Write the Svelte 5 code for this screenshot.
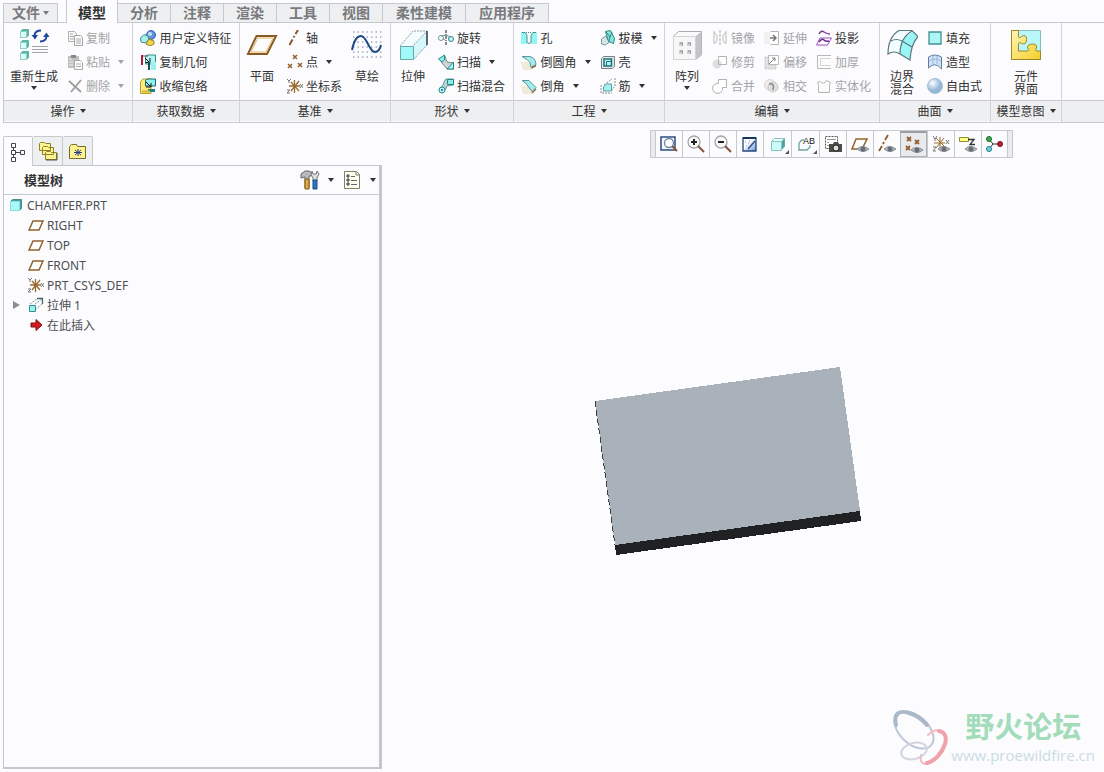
<script lang="ts">
	type Item = { icon: string; label: string; menu?: boolean; disabled?: boolean };
	type Big = { icon: string; lines: string[]; menu?: boolean };
	type Group = { name: string; kind: string; big?: Big; columns: Item[][]; after?: Big };

	const tabs = ['分析', '注释', '渲染', '工具', '视图', '柔性建模', '应用程序'];

	const groups: Group[] = [
		{
			name: '操作',
			kind: 'wide',
			big: { icon: 'regen', lines: ['重新生成'], menu: true },
			columns: [[
				{ icon: 'copy', label: '复制', disabled: true },
				{ icon: 'paste', label: '粘贴', menu: true, disabled: true },
				{ icon: 'remove', label: '删除', menu: true, disabled: true }
			]]
		},
		{
			name: '获取数据',
			kind: 'center',
			columns: [[
				{ icon: 'udf', label: '用户定义特征' },
				{ icon: 'copygeom', label: '复制几何' },
				{ icon: 'shrink', label: '收缩包络' }
			]]
		},
		{
			name: '基准',
			kind: 'start',
			big: { icon: 'plane', lines: ['平面'] },
			columns: [[
				{ icon: 'axis', label: '轴' },
				{ icon: 'point', label: '点', menu: true },
				{ icon: 'csys', label: '坐标系' }
			]],
			after: { icon: 'sketch', lines: ['草绘'] }
		},
		{
			name: '形状',
			kind: 'start',
			big: { icon: 'extrude', lines: ['拉伸'] },
			columns: [[
				{ icon: 'revolve', label: '旋转' },
				{ icon: 'sweep', label: '扫描', menu: true },
				{ icon: 'blend', label: '扫描混合' }
			]]
		},
		{
			name: '工程',
			kind: 'center',
			columns: [
				[
					{ icon: 'hole', label: '孔' },
					{ icon: 'round', label: '倒圆角', menu: true },
					{ icon: 'chamfer', label: '倒角', menu: true }
				],
				[
					{ icon: 'draft', label: '拔模', menu: true },
					{ icon: 'shell', label: '壳' },
					{ icon: 'rib', label: '筋', menu: true }
				]
			]
		},
		{
			name: '编辑',
			kind: 'start',
			big: { icon: 'pattern', lines: ['阵列'], menu: true },
			columns: [
				[
					{ icon: 'mirror', label: '镜像', disabled: true },
					{ icon: 'trim', label: '修剪', disabled: true },
					{ icon: 'merge', label: '合并', disabled: true }
				],
				[
					{ icon: 'extend', label: '延伸', disabled: true },
					{ icon: 'offset', label: '偏移', disabled: true },
					{ icon: 'intersect', label: '相交', disabled: true }
				],
				[
					{ icon: 'project', label: '投影' },
					{ icon: 'thicken', label: '加厚', disabled: true },
					{ icon: 'solidify', label: '实体化', disabled: true }
				]
			]
		},
		{
			name: '曲面',
			kind: 'start',
			big: { icon: 'boundary', lines: ['边界', '混合'] },
			columns: [[
				{ icon: 'fill', label: '填充' },
				{ icon: 'style', label: '造型' },
				{ icon: 'freestyle', label: '自由式' }
			]]
		},
		{
			name: '模型意图',
			kind: 'center',
			big: { icon: 'component', lines: ['元件', '界面'] },
			columns: []
		}
	];

	const viewTools = [
		{ icon: 'refit', label: '重新调整' },
		{ icon: 'zoomin', label: '放大' },
		{ icon: 'zoomout', label: '缩小' },
		{ icon: 'repaint', label: '重画' },
		{ icon: 'shading', label: '显示样式', menu: true },
		{ icon: 'views', label: '已命名视图', menu: true },
		{ icon: 'viewmgr', label: '视图管理器' },
		{ icon: 'planeshow', label: '平面显示' },
		{ icon: 'axisshow', label: '轴显示' },
		{ icon: 'pointshow', label: '点显示', on: true },
		{ icon: 'csysshow', label: '坐标系显示' },
		{ icon: 'noteshow', label: '注释显示' },
		{ icon: 'spin', label: '旋转中心' }
	];

	const tree = [
		{ icon: 'plane16', label: 'RIGHT' },
		{ icon: 'plane16', label: 'TOP' },
		{ icon: 'plane16', label: 'FRONT' },
		{ icon: 'csys', label: 'PRT_CSYS_DEF' },
		{ icon: 'extrude16', label: '拉伸 1', expand: true },
		{ icon: 'insert', label: '在此插入' }
	];

	const eye = '<path d="M7 15q5-5 12 0q-6 5-12 0z" fill="#b4b8bc" stroke="#8b8e92"/><circle cx="13" cy="15" r="2.500" fill="#66707a"/>';
	const cube = (y: number) =>
		`<path d="M2.500 ${y + 2.5}l2-2h6v6l-2 2h-6z" fill="#4fb8a8" stroke="#62b3a6"/><path d="M2.500 ${y + 2.5}h6v6h-6z" fill="#dffcf8" stroke="#8ed0c6"/>`;

	const icons: Record<string, string> = {
		// 32px
		regen: cube(0) + cube(11) + cube(22) +
			'<path d="M14 17.500h16M14 20.500h16M14 23.500h16" stroke="#a2a4a8"/><path d="M23 1.500q-6 0-6.500 5M22 12.500q6 0 6.500-5" fill="none" stroke="#1f459c" stroke-width="2"/><path d="M13.500 6h6.500l-3 4.500zM25 8h6.500l-3-4.500z" fill="#1f459c"/>',
		plane: '<path d="M10.500 7h19.500l-9 18H2z" fill="#fdfdfd" stroke="#8a5a22" stroke-width="2"/><path d="M12 9h15l-7 14H5z" fill="none" stroke="#ddb86a"/>',
		sketch: '<path d="M2 3h29M2 8h29M2 13h29M2 18h29M2 23h29M2 28h29" stroke="#9fabc2" stroke-width="1.500" stroke-dasharray="1.500 3"/><path d="M1 21C3 11 6 7 10 7c6 0 8 16 14 16 3 0 5-3 6-7" fill="none" stroke="#204a86" stroke-width="2"/>',
		extrude: '<path d="M16 2h14v14L17 30V17H3z" fill="#f4fcff"/><path d="M30 2v14L17 30V17z" fill="#d5f7fb"/><path d="M3 17L16 2h14L16 17M30 16L17 30" fill="none" stroke="#86a0a3" stroke-dasharray="2 1"/><path d="M30 2v14" stroke="#334" stroke-width="1.500"/><path d="M3.500 17.500h13v13h-13z" fill="#a2f9fa" stroke="#64a8a8"/>',
		pattern: '<path d="M2.500 7l5-4.500h23V26l-6 4.500h-22z" fill="#fafafa" stroke="#a9abae"/><path d="M25 7l5.500-4.500V26L25 30.500z" fill="#c3c5c8"/><path d="M2.500 7.500h22v23h-22z" fill="#f7f7f8" stroke="#d3d4d6"/><path d="M8 13h4v4H8zM16 13h4v4h-4zM8 21h4v4H8zM16 21h4v4h-4z" fill="#ccced1"/><path d="M9 14h2.500v2.500M17 14h2.500v2.500M9 22h2.500v2.500M17 22h2.500v2.500" fill="none" stroke="#8e9094"/>',
		boundary: '<path d="M2 25Q3 8 12 1.500h14Q16 8 15 26 9 22 2 25z" fill="#f3fcff"/><path d="M15 12L27 2l5 6q-7 7-8 23l-10-6z" fill="#9af5f6"/><path d="M2 25Q2 8 13 1.500h13l6 6Q25 15 24 31L14 25Q8 21 2 25zM5 12q5-3 11 0l10 6M14 25Q14 9 26 2" fill="none" stroke="#5d777c" stroke-width="1.200"/>',
		component: '<defs><linearGradient id="gy" x1="0" y1="0" x2="1" y2="1"><stop stop-color="#fff6b8"/><stop offset="1" stop-color="#f5cf25"/></linearGradient></defs><path d="M1.500 1.500h29v29h-29z" fill="#b9f7fa" stroke="#87bfc0"/><path d="M1.500 1.500h7v6q1 3 3 0 5-3 5 3t-5 4q-2-2-3 0v7.500h9q3-1 0-3 0-4 5-4t4 4q-2 2 0 3h4v8.500h-29z" fill="url(#gy)" stroke="#9a8726"/>',
		// 16px
		copy: '<path d="M1.500 1.500h6l2 2v8h-8z" fill="#f8f8f8" stroke="#b2b2b2"/><path d="M7.500 5.500h6l2 2v8h-8z" fill="#fcfcfc" stroke="#a5a5a5"/><path d="M3 4h3M3 6.500h4M3 9h4M9 9h5M9 11h5M9 13h5" stroke="#aaa"/>',
		paste: '<path d="M1 2h11v12H1z" fill="#bfc0c1"/><path d="M4 1h5v3H4z" fill="#888"/><path d="M2 5h3M2 8h4M2 11h4" stroke="#eee"/><path d="M7.500 6.500h6l2 2v7h-8z" fill="#fcfcfc" stroke="#aaa"/><path d="M9 10h5M9 12.500h5" stroke="#aaa"/>',
		remove: '<path d="M2 3l12 11M14 2L4 14" stroke="#9c9c9c" stroke-width="1.800"/>',
		udf: '<circle cx="11" cy="5" r="4.500" fill="#5f92da" stroke="#3a62a4"/><circle cx="10" cy="4" r="2" fill="#c9e0fa"/><path d="M.500 8L4 4.500 8 6l1 4-4 3-4-1z" fill="#a5efe8" stroke="#3c8d8d"/><path d="M6 14l3-5 5 2v3l-4 2z" fill="#efd64c" stroke="#98802a"/>',
		copygeom: '<path d="M5.500 2.500L7 1h8.500v9H5.500z" fill="#b4f5f3" stroke="#3a8a86"/><path d="M1 1h2v10H1z" fill="#b51b36"/><path d="M3 2h5" stroke="#555"/><path d="M5 4l4 4M5.500 8.500H10V4" fill="none" stroke="#111"/><path d="M11 8h5v8h-5z" fill="#9bf1f2"/><path d="M8 8h2v8H8z" fill="#1b4f54"/>',
		shrink: '<path d="M.500 3.500L3 1h8v14.500H.500z" fill="#ffeb7a" stroke="#b59c32"/><path d="M5.500 2.500L7 1h8.500v7H5.500z" fill="#8ff0ef" stroke="#1d6664"/><path d="M6 4l4 4M6 9h5V5" fill="none" stroke="#111"/><path d="M8 11h7v3H8z" fill="#238186"/><path d="M2 13.500h8" stroke="#cdb53c" stroke-width="2"/>',
		axis: '<path d="M11 0L8.500 4M7.500 6l-1 1.500M5.500 9.500L2.500 15" stroke="#8d5826" stroke-width="2"/>',
		point: '<path d="M6 1l4 4m0-4L6 5M1 10l4 4m0-4l-4 4M11 9l4 4m0-4l-4 4" stroke="#95602f" stroke-width="1.500"/>',
		csys: '<path d="M2 8h11M7.500 2v13M4 4l8 9M12 3L4 13" stroke="#9a6a2e" stroke-width="1.300"/><path d="M0 1l2 2 2-2M2 3v2M0 12h3l-3 3h3M13 6l3 4m0-4l-3 4" fill="none" stroke="#777"/>',
		revolve: '<circle cx="3" cy="8" r="2.500" fill="#fff" stroke="#6a979b"/><circle cx="13" cy="9" r="2.500" fill="#b5fafa" stroke="#447e83"/><path d="M8 0v16" stroke="#111" stroke-dasharray="3 1 1 1"/><path d="M3 6q5-2 10 1M5 9l2 1" fill="none" stroke="#6a979b"/>',
		sweep: '<path d="M2 5l5-3 2 6 7 1v6H9L4 9z" fill="#ced5d8" stroke="#7d8b8e"/><path d="M.500 5L6.500 1v5L4 8z" fill="#86f0ea" stroke="#248985"/><path d="M9 15h6.500V8z" fill="#a9f6f2" stroke="#248985"/>',
		blend: '<path d="M8 1h7.500v6L9 8q-1 5-5 6-2-2-2-4 3-1 4-6z" fill="#bcd3d6" stroke="#6b989b"/><path d="M9.500 1.500h6v5h-6z" fill="#8aece6" stroke="#248985"/><circle cx="4" cy="12" r="3" fill="#b4f9f6" stroke="#2c8789"/><circle cx="4" cy="12" r="1" fill="#2564a0"/>',
		hole: '<path d="M0 2h4l2 4v8H0zM16 2h-4l-2 4v8h6z" fill="#93f6f4"/><path d="M1 2.500h3l2 3v7q2 2 4 0v-7l2-3h3" fill="none" stroke="#4b8f92"/><path d="M5 2.500h6" stroke="#35878a" stroke-dasharray="1 1"/>',
		round: '<path d="M0 8h8l3 3v5H2z" fill="#f0eadb"/><path d="M1 2.500h8q6 2 6 8l-5 3q0-6-4-8z" fill="#9feeeb" stroke="#5f9395"/><path d="M10.500 14l4.500-2.500" stroke="#8f7043" stroke-width="1.500"/>',
		chamfer: '<path d="M0 8h8l3 3v5H2z" fill="#f0eadb"/><path d="M1 2.500h7l7 7-4 4-6-8z" fill="#9feeeb" stroke="#5f9395"/><path d="M11 15l4-4" stroke="#8f7043" stroke-width="1.500"/>',
		draft: '<path d="M1.500 9l4-3 4 6-4 3-4-1z" fill="#d6e6e8" stroke="#7b979a"/><path d="M5.500 1.500l5-1 4 8-1 5-5-2z" fill="#86e6dd" stroke="#318584"/><path d="M6 2l4 5-1 4M10 7l2-5" fill="none" stroke="#318584"/>',
		shell: '<path d="M1.500 4.500l2-2h11v10l-2 2h-11z" fill="#e4e7e8" stroke="#71868a"/><path d="M4 5h7.500v7H4z" fill="#a9f9f7" stroke="#2a6f78" stroke-width="1.500"/><path d="M6.500 12V7.500H11" fill="none" stroke="#2a6f78"/>',
		rib: '<path d="M4 7L15 1v8l-4 4H4z" fill="#f7fbfc"/><path d="M4 7l8-6M15 0v8l-4 5M1 7v8h11" fill="none" stroke="#8b8b8b" stroke-dasharray="2 1"/><path d="M3.500 13V9l3-3h5v7z" fill="#a2f3ee" stroke="#5a9ea1"/>',
		mirror: '<path d="M2 1.500v12l3-2V6zM14 1.500v12l-3-2V6z" fill="#fafafa" stroke="#bdbdbd"/><path d="M8 0v16" stroke="#aaa" stroke-dasharray="3 1"/>',
		trim: '<path d="M6.500 2.500h8v8h-8z" fill="#fff" stroke="#b2b2b2"/><circle cx="5" cy="10" r="4.500" fill="#dedede"/><path d="M6.500 6v4.500H10" fill="none" stroke="#b2b2b2"/>',
		merge: '<path d="M6.500 1.500h8v8h-4a5 5 0 1 1-4-4z" fill="#fff" stroke="#b2b2b2"/>',
		extend: '<path d="M0 2h6v12H0z" fill="#f0f0f0"/><path d="M6.500 1.500h8v13h-8" fill="#fff" stroke="#b5b5b5"/><path d="M6 8h6M9 5l3 3-3 3" fill="none" stroke="#777" stroke-width="1.500"/>',
		offset: '<path d="M1 3v12h11v-4H5V3z" fill="#e2e2e2" stroke="#c5c5c5" stroke-dasharray="2 1"/><path d="M4.500 1.500h10v9h-10z" fill="#fff" stroke="#bbb"/><path d="M5 10l6-6M8 4h3v3" fill="none" stroke="#808080"/>',
		intersect: '<circle cx="6" cy="7" r="5.500" fill="#ececec" stroke="#d6d6d6"/><circle cx="9" cy="9" r="5" fill="#e0e0e0" stroke="#cbcbcb"/><path d="M5 6q6-1 4 6" fill="none" stroke="#8b8b8b" stroke-width="1.500"/>',
		project: '<path d="M3 4q2-4 5-2t6 2" fill="none" stroke="#78389a" stroke-width="1.500"/><path d="M4 8h11.500l-4 7H.500z" fill="#fff" stroke="#9b4fc2"/><path d="M3 12q3-4 5-2t5 1" fill="none" stroke="#74288e" stroke-width="1.500"/>',
		thicken: '<path d="M15 1.500H1.500v13H15" fill="none" stroke="#b8b8b8"/><path d="M15 4.500H4.500v7H15" fill="none" stroke="#d2d2d2"/>',
		solidify: '<path d="M1.500 4.500l3-1q3 4 6-1l4 2-1 3v7h-11v-7z" fill="#fafafa" stroke="#b5b5b5"/>',
		fill: '<path d="M2 2h12v12H2z" fill="#aef5f5" stroke="#3b9492" stroke-width="1.300"/>',
		style: '<path d="M1.500 3q6-4 13 0v12Q8 7 1.500 14z" fill="#cfe3f6" stroke="#5f7da3"/><path d="M6 2v8M10 2v8M2 7q6-4 12 0" fill="none" stroke="#9dbadb"/>',
		freestyle: '<defs><radialGradient id="ball" cx=".35" cy=".3"><stop stop-color="#fff"/><stop offset="1" stop-color="#94b8d8"/></radialGradient></defs><circle cx="8" cy="8" r="7.500" fill="url(#ball)" stroke="#a3bdd4"/>',
		plane16: '<path d="M5 4h10l-4 9H1z" fill="#fff" stroke="#90602f" stroke-width="1.500"/>',
		extrude16: '<path d="M2 7l7-5M7 7l7-5M7 13l7-6" fill="none" stroke="#578183" stroke-dasharray="1 1"/><path d="M9 1.500h5.500V7" fill="none" stroke="#3e696c" stroke-width="1.300"/><path d="M1.500 8.500h6v6h-6z" fill="#94f4f1" stroke="#3f8d8c"/>',
		insert: '<path d="M3 6h5V2.500L14 8l-6 5.500V10H3z" fill="#d71920" stroke="#7a1010"/>',
		part: '<path d="M2.500 4.500l2-2h9v9l-2 2h-9z" fill="#4ba1a0" stroke="#4a8f90"/><path d="M2.500 4.500h9v9h-9z" fill="#a7fbfa" stroke="#8fdcda"/>',
		// 20px
		treetab: '<g fill="#fff" stroke="#444"><path d="M5.500 5v12M5.500 10.500h7" /><path d="M3.500 1.500h4v4h-4zM3.500 8.500h4v4h-4zM3.500 15.500h4v4h-4zM12.500 8.500h4v4h-4z"/></g>',
		folders: '<g fill="#fff48e" stroke="#8d812b"><path d="M1.500 2.500l1-1h4l1 1h5v7h-11zM4.500 6.500l1-1h4l1 1h5v7h-11zM7.500 11.500l1-1h4l1 1h5v7h-11z"/></g><path d="M8 19h11v-7" fill="none" stroke="#555"/>',
		favorite: '<path d="M1.500 5.500l2-2h5l1 2h8v12h-16z" fill="#fff48e" stroke="#77702c"/><path d="M6 11.500h8M10 8v7M7 9l6 5M13 9l-6 5" stroke="#253e82"/>',
		settings: '<path d="M1 8V4l4-3h4l3 2-1 3H9v12H5V7z" fill="#b7bbc0" stroke="#666"/><path d="M5 9h4v10H5z" fill="#e7aa37" stroke="#74591d"/><path d="M12 1l1 3h3l1-3 2 3-2 4v3h-4V8l-2-3z" fill="#ddd" stroke="#777"/><path d="M13 10h4v9h-4z" fill="#3273c2" stroke="#184a87"/>',
		list: '<path d="M2.500 1.500h12l3 3v14h-15z" fill="#fffff4" stroke="#807f65"/><path d="M14 1v4h4" fill="none" stroke="#807f65"/><path d="M9 6.500h4M9 10.500h6M9 14.500h6" stroke="#666"/><path d="M5 5h2v2H5zM5 9h2v2H5zM5 13h2v2H5z" fill="#fff" stroke="#333"/>',
		refit: '<path d="M2 3h14v13H2z" fill="#f6fbff" stroke="#2a4b80" stroke-width="1.500"/><circle cx="10" cy="9" r="4.500" fill="#fff" stroke="#71869b" stroke-width="1.300"/><path d="M13 12l5 5" stroke="#8a5430" stroke-width="2"/>',
		zoomin: '<circle cx="8" cy="8" r="6" fill="#fafafa" stroke="#a6a6a6" stroke-width="1.300"/><path d="M5 8h6M8 5v6" stroke="#222" stroke-width="2"/><path d="M12 12l6 6" stroke="#85543a" stroke-width="2"/>',
		zoomout: '<circle cx="8" cy="8" r="6" fill="#fafafa" stroke="#a6a6a6" stroke-width="1.300"/><path d="M5 8h6" stroke="#222" stroke-width="2"/><path d="M12 12l6 6" stroke="#85543a" stroke-width="2"/>',
		repaint: '<defs><linearGradient id="gb" x1="0" y1="0" x2="1" y2="1"><stop offset=".4" stop-color="#fff"/><stop offset="1" stop-color="#5f90dc"/></linearGradient></defs><path d="M3 4h13v13H3z" fill="url(#gb)" stroke="#24457b" stroke-width="1.300"/><path d="M3 4h13" stroke="#17335f" stroke-width="2"/><path d="M8 15L15 7" stroke="#33517f" stroke-width="1.500"/><path d="M5 8h1m2 1h1m-3 3h1m2-5h1" stroke="#6f8fbd"/>',
		shading: '<path d="M3.500 7.500l3-3h10v8l-3 3h-10z" fill="#4da5a2" stroke="#6aa9a7"/><path d="M3.500 7.500h10v9h-10z" fill="#cdfbf9" stroke="#86c4c2"/><path d="M3.500 7.500l3-3h10l-3 3z" fill="#eafffd" stroke="#86c4c2"/>',
		views: '<path d="M3 9l3-3h2M3 9v7h8l3-3v-2" fill="none" stroke="#6aa3a1" stroke-width="1.300"/><text x="7" y="10" font-family="Liberation Sans" font-size="9" fill="#111">AB</text>',
		viewmgr: '<path d="M2.500 2.500h12v12h-12z" fill="#fff" stroke="#555" stroke-dasharray="2 1"/><path d="M4 5.500h9M4 8.500h2M4 11.500h2" stroke="#999"/><path d="M6 10h4l1-2h4l1 2h3v8H6z" fill="#4b4b48"/><circle cx="13" cy="14" r="3" fill="#ddd" stroke="#222"/>',
		planeshow: '<path d="M6 5h11l-5 10H2z" fill="#fff" stroke="#90602f" stroke-width="1.500"/>' + eye,
		axisshow: '<path d="M11 1L8 6M7 8l-1 2M5 12l-3 5" stroke="#8d5826" stroke-width="1.800"/>' + eye,
		pointshow: '<path d="M3 2l4 4m0-4L3 6M2 11l4 4m0-4l-4 4M11 5l4 4m0-4l-4 4" stroke="#95602f" stroke-width="1.800"/>' + eye,
		csysshow: '<path d="M3 9h11M9 3v12M5 4l9 9M13 4L5 14" stroke="#9a6a2e"/><path d="M2 2l2 3 2-3M4 5v2M2 13h3l-3 4h3M15 6l3 4m0-4l-3 4" fill="none" stroke="#777"/>' + eye,
		noteshow: '<path d="M1.500 3.500h9v4h-9z" fill="#ffff80" stroke="#8e8e35"/><path d="M10 5.500h6l-4 5h5" fill="none" stroke="#333" stroke-width="1.300"/>' + eye,
		spin: '<path d="M4 5l4 5-4 5M8 10h7" fill="none" stroke="#333"/><circle cx="4" cy="5" r="2.500" fill="#36a94b" stroke="#1a6d2b"/><circle cx="4" cy="15" r="2.500" fill="#66d5df" stroke="#287d87"/><circle cx="15" cy="10" r="2.500" fill="#bd1f31" stroke="#751020"/>'
	};
</script>

{#snippet icon(name: string, size: number)}
	<svg class="icon s{size}" viewBox="0 0 {size} {size}" aria-hidden="true">{@html icons[name]}</svg>
{/snippet}

{#snippet bigButton(b: Big)}
	<button class="big">
		{@render icon(b.icon, 32)}
		<span class="caption">
			{#each b.lines as line}<span>{line}</span>{/each}
		</span>
		{#if b.menu}<i class="caret"></i>{/if}
	</button>
{/snippet}

<div class="app">
	<nav class="tabs">
		<button class="tab file">文件<i class="caret"></i></button>
		<button class="tab active">模型</button>
		{#each tabs as tab}
			<button class="tab" class:long={tab.length > 2}>{tab}</button>
		{/each}
	</nav>

	<section class="ribbon">
		{#each groups as group}
			<div class="group">
				<div class="tools {group.kind}">
					{#if group.big}{@render bigButton(group.big)}{/if}
					{#if group.columns.length}
						<div class="columns">
							{#each group.columns as column}
								<div class="column">
									{#each column as item}
										<button class="item" disabled={item.disabled}>
											{@render icon(item.icon, 16)}
											<span>{item.label}</span>
											{#if item.menu}<i class="caret"></i>{/if}
										</button>
									{/each}
								</div>
							{/each}
						</div>
					{/if}
					{#if group.after}{@render bigButton(group.after)}{/if}
				</div>
				<button class="footer">{group.name}<i class="caret"></i></button>
			</div>
		{/each}
		<div class="group rest">
			<div class="tools"></div>
			<div class="footer"></div>
		</div>
	</section>

	<main class="work">
		<aside class="side">
			<div class="side-tabs">
				<button class="side-tab active" aria-label="模型树">{@render icon('treetab', 20)}</button>
				<button class="side-tab" aria-label="文件夹浏览器">{@render icon('folders', 20)}</button>
				<button class="side-tab" aria-label="收藏夹">{@render icon('favorite', 20)}</button>
			</div>
			<div class="panel">
				<header class="panel-head">
					<h2>模型树</h2>
					<button class="drop" aria-label="设置">{@render icon('settings', 20)}<i class="caret"></i></button>
					<button class="drop" aria-label="显示">{@render icon('list', 20)}<i class="caret"></i></button>
				</header>
				<ul class="tree">
					<li class="root"><button class="node">{@render icon('part', 16)}CHAMFER.PRT</button></li>
					{#each tree as node}
						<li>
							<span class="twist">{#if node.expand}<i class="arrow"></i>{/if}</span>
							<button class="node">{@render icon(node.icon, 16)}{node.label}</button>
						</li>
					{/each}
				</ul>
			</div>
		</aside>

		<section class="canvas">
			<div class="view-bar">
				<span class="grip"></span>
				{#each viewTools as tool}
					<button class="view" class:on={tool.on} class:menu={tool.menu} aria-label={tool.label}>
						{@render icon(tool.icon, 20)}
					</button>
				{/each}
				<span class="grip"></span>
			</div>

			<svg class="model" viewBox="0 0 266 188" shape-rendering="crispEdges" aria-hidden="true">
				<path d="M0 34L245 0l20 144L20 178z" fill="#a9b1ba" />
				<path d="M20 178l245-34 1 10-245 34z" fill="#202123" />
				<path d="M0 34l20 144" stroke="#3b4044" stroke-dasharray="6 3" />
			</svg>

			<div class="watermark">
				<svg class="rings" viewBox="0 0 58 58" fill="none" stroke-linecap="round" aria-hidden="true">
					<ellipse cx="21" cy="22" rx="23" ry="14" transform="rotate(42 21 22)" stroke="#bcc6d6" stroke-width="2" />
					<path d="M3 17C0 5 7 2 16 5c7 2 13 6 18 12" stroke="#aab8ca" stroke-width="4" />
					<ellipse cx="21" cy="43" rx="13" ry="8" transform="rotate(-14 21 43)" stroke="#d0d5e0" stroke-width="2" />
					<path d="M35 27C43 19 53 22 53 31c0 11-10 24-20 25-5 0-6-4-5-9" stroke="#f3bcc2" stroke-width="2" />
					<path d="M46 23c6 1 8 6 6 13-3 9-10 17-18 19" stroke="#f0a2ab" stroke-width="4" />
				</svg>
				<div class="mark-text">
					<strong>野火论坛</strong>
					<span>www.proewildfire.cn</span>
				</div>
			</div>
		</section>
	</main>
</div>

<style>
	:global(body) {
		margin: 0;
		background: #fcfcfe;
	}

	.app {
		display: flex;
		flex-direction: column;
		min-height: 100vh;
		font-family: "Noto Sans", "Noto Sans CJK SC", sans-serif;
		font-size: 12px;
		line-height: 13px;
		color: #333;
	}

	button {
		margin: 0;
		padding: 0;
		border: 0;
		background: none;
		font: inherit;
		color: inherit;
		white-space: nowrap;
	}

	.icon {
		display: block;
		flex: none;
	}

	.s16 {
		width: 16px;
		height: 16px;
	}

	.s20 {
		width: 20px;
		height: 20px;
	}

	.s32 {
		width: 32px;
		height: 32px;
	}

	.caret {
		flex: none;
		border: 3px solid transparent;
		border-top: 4px solid currentColor;
		border-bottom: 0;
	}

	/* ribbon tabs */
	.tabs {
		display: flex;
		align-items: flex-end;
		height: 22px;
		padding-left: 3px;
	}

	.tab {
		box-sizing: border-box;
		height: 19px;
		padding: 0 12px;
		border-top: 1px solid #c6c9cd;
		border-right: 1px solid #c6c9cd;
		background: #eeeff1;
		font-size: 14px;
		font-weight: bold;
		line-height: 18px;
		color: #77797d;
	}

	.tab.long {
		padding: 0 13px;
	}

	.tab.file {
		display: flex;
		align-items: center;
		gap: 3px;
		margin-right: 8px;
		padding: 0 8px;
		border-left: 1px solid #c6c9cd;
	}

	.tab.active {
		height: 23px;
		margin-bottom: -1px;
		padding: 3px 11px 0;
		border-top: 0;
		border-left: 1px solid #c6c9cd;
		background: #fcfcfe;
		color: #333;
		z-index: 1;
	}

	/* ribbon */
	.ribbon {
		display: grid;
		grid-template-columns: 129px 107px 151px 123px 151px 215px 111px 71px 1fr;
		margin-left: 3px;
		border: solid #c6c9cd;
		border-width: 1px 0 1px 1px;
	}

	.group {
		display: flex;
		flex-direction: column;
		border-right: 1px solid #d0d3d7;
	}

	.group.rest {
		border-right: 0;
	}

	.tools {
		display: flex;
		gap: 3px;
		height: 77px;
	}

	.tools.center {
		justify-content: center;
	}

	.big {
		display: flex;
		flex-direction: column;
		align-items: center;
		width: 44px;
		padding-top: 6px;
	}

	.wide .big {
		width: 60px;
	}

	.caption {
		display: flex;
		flex-direction: column;
		padding: 9px 0 3px;
	}

	.columns {
		display: flex;
		gap: 9px;
		padding-top: 3px;
	}

	.column {
		display: flex;
		flex-direction: column;
		align-items: flex-start;
	}

	.item {
		display: flex;
		align-items: center;
		gap: 3px;
		height: 24px;
	}

	.item .caret {
		margin-left: 5px;
	}

	.item:disabled {
		color: #a3a4a6;
	}

	.footer {
		display: flex;
		align-items: center;
		justify-content: center;
		gap: 5px;
		height: 21px;
		border-top: 1px solid #c6c9cd;
		background: #eeeff1;
	}

	/* model tree */
	.work {
		display: flex;
		flex: 1;
	}

	.side {
		display: flex;
		flex-direction: column;
		width: 379px;
		margin: 13px 0 3px 3px;
	}

	.side-tabs {
		display: flex;
	}

	.side-tab {
		display: flex;
		align-items: center;
		justify-content: center;
		box-sizing: border-box;
		width: 30px;
		height: 29px;
		border: solid #c6c9cd;
		border-width: 1px 1px 0 0;
		border-radius: 2px 2px 0 0;
		background: #eeeff1;
	}

	.side-tab.active {
		height: 30px;
		margin-bottom: -1px;
		border-left-width: 1px;
		background: #fcfcfe;
		z-index: 1;
	}

	.panel {
		flex: 1;
		border: solid #c3c7cb;
		border-width: 1px 3px 2px 1px;
	}

	.panel-head {
		display: flex;
		align-items: center;
		gap: 8px;
		height: 28px;
		padding: 0 3px 0 20px;
		border-bottom: 1px solid #c6c9cd;
	}

	h2 {
		flex: 1;
		margin: 0;
		font-size: 13px;
		line-height: 16px;
	}

	.drop {
		display: flex;
		align-items: center;
		gap: 8px;
	}

	.tree {
		margin: 0;
		padding: 0;
		list-style: none;
		color: #4d4f52;
	}

	.tree li {
		display: flex;
		height: 20px;
	}

	.root {
		padding-left: 4px;
	}

	.twist {
		display: flex;
		align-items: center;
		justify-content: center;
		width: 24px;
	}

	.arrow {
		border: 4px solid transparent;
		border-right: 0;
		border-left: 7px solid #8b8d90;
	}

	.node {
		display: flex;
		align-items: center;
		gap: 3px;
	}

	/* graphics area */
	.canvas {
		position: relative;
		display: flex;
		flex: 1;
		align-items: flex-start;
		justify-content: flex-end;
		min-height: 480px;
		padding: 7px 91px 0 0;
	}

	.view-bar {
		display: flex;
		border: 1px solid #c6c9cd;
		background: #fcfcfe;
	}

	.grip {
		width: 4px;
		background: #e9ebee;
	}

	.view {
		position: relative;
		display: flex;
		align-items: center;
		justify-content: center;
		box-sizing: border-box;
		width: 27px;
		height: 26px;
		border-left: 1px solid #c6c9cd;
	}

	.view:nth-last-child(2) {
		border-right: 1px solid #c6c9cd;
	}

	.view.menu {
		width: 28px;
	}

	.view.menu::after {
		position: absolute;
		right: 2px;
		bottom: 3px;
		border: 2px solid #555;
		border-top-color: transparent;
		border-left-color: transparent;
		content: "";
	}

	.view.on {
		border: 1px solid #aeb2b7;
		border-top: 2px solid #9a9ea4;
		background: #e9eaed;
	}

	.model {
		position: absolute;
		top: 244px;
		left: 213px;
		width: 266px;
		height: 188px;
	}

	.watermark {
		position: absolute;
		right: 9px;
		bottom: 6px;
		display: flex;
		align-items: center;
	}

	.rings {
		width: 58px;
		height: 58px;
	}

	.mark-text {
		display: flex;
		flex-direction: column;
		align-items: center;
	}

	.mark-text strong {
		font-size: 29px;
		line-height: 36px;
		color: #a3dcba;
	}

	.mark-text span {
		font-family: "Open Sans", sans-serif;
		font-size: 15px;
		line-height: 20px;
		color: #c9dde3;
	}
</style>
